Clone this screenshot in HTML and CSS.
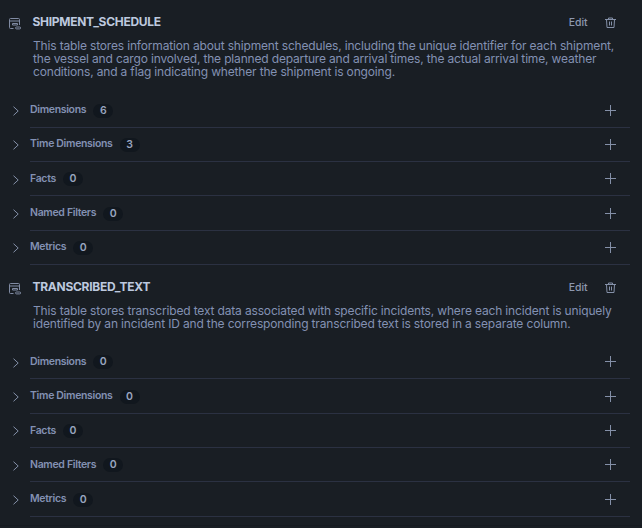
FILE: index.html
```
<!DOCTYPE html>
<html lang="en">
<head>
<meta charset="utf-8">
<title>Tables</title>
<link rel="stylesheet" href="styles.css">
</head>
<body>
<svg width="0" height="0" class="defs">
  <symbol id="table" viewBox="0 0 12 12"><path d="M4.500 10.500H1.500A1 1 0 0 1 .5 9.500V1.500A1 1 0 0 1 1.500 .5H9.500A1 1 0 0 1 10.500 1.500V7M.5 3H10.500M3.500 5.500H8.500V7H3.500ZM7.500 9H10.700A.9 .9 0 0 1 10.700 10.900H7.500A.9 .9 0 0 1 7.500 9Z"/></symbol>
  <symbol id="trash" viewBox="0 0 11 12"><path d="M0 2.500H11M3.500 2.500V1H7.500V2.500M1.500 2.500L2 10.500H9L9.500 2.500M4.500 4.500V8.500M6.500 4.500V8.500"/></symbol>
  <symbol id="plus" viewBox="0 0 11 11"><path d="M5.500 0V11M0 5.500H11"/></symbol>
  <symbol id="chevron" viewBox="0 0 6 10"><path d="M.5 .7L5.200 5L.5 9.300"/></symbol>
</svg>
<main>
  <section class="table first">
    <header><svg class="table-icon"><use href="#table"/></svg><h2>SHIPMENT_SCHEDULE</h2><button class="edit">Edit</button><svg class="trash"><use href="#trash"/></svg></header>
    <p>This table stores information about shipment schedules, including the unique identifier for each shipment,<br>the vessel and cargo involved, the planned departure and arrival times, the actual arrival time, weather<br>conditions, and a flag indicating whether the shipment is ongoing.</p>
    <ul>
      <li><svg class="chevron"><use href="#chevron"/></svg><div class="row"><span>Dimensions</span><b>6</b><svg class="plus"><use href="#plus"/></svg></div></li>
      <li><svg class="chevron"><use href="#chevron"/></svg><div class="row"><span>Time Dimensions</span><b>3</b><svg class="plus"><use href="#plus"/></svg></div></li>
      <li><svg class="chevron"><use href="#chevron"/></svg><div class="row"><span>Facts</span><b>0</b><svg class="plus"><use href="#plus"/></svg></div></li>
      <li><svg class="chevron"><use href="#chevron"/></svg><div class="row"><span>Named Filters</span><b>0</b><svg class="plus"><use href="#plus"/></svg></div></li>
      <li><svg class="chevron"><use href="#chevron"/></svg><div class="row"><span>Metrics</span><b>0</b><svg class="plus"><use href="#plus"/></svg></div></li>
    </ul>
  </section>
  <section class="table second">
    <header><svg class="table-icon"><use href="#table"/></svg><h2>TRANSCRIBED_TEXT</h2><button class="edit">Edit</button><svg class="trash"><use href="#trash"/></svg></header>
    <p>This table stores transcribed text data associated with specific incidents, where each incident is uniquely<br>identified by an incident ID and the corresponding transcribed text is stored in a separate column.</p>
    <ul>
      <li><svg class="chevron"><use href="#chevron"/></svg><div class="row"><span>Dimensions</span><b>0</b><svg class="plus"><use href="#plus"/></svg></div></li>
      <li><svg class="chevron"><use href="#chevron"/></svg><div class="row"><span>Time Dimensions</span><b>0</b><svg class="plus"><use href="#plus"/></svg></div></li>
      <li><svg class="chevron"><use href="#chevron"/></svg><div class="row"><span>Facts</span><b>0</b><svg class="plus"><use href="#plus"/></svg></div></li>
      <li><svg class="chevron"><use href="#chevron"/></svg><div class="row"><span>Named Filters</span><b>0</b><svg class="plus"><use href="#plus"/></svg></div></li>
      <li><svg class="chevron"><use href="#chevron"/></svg><div class="row"><span>Metrics</span><b>0</b><svg class="plus"><use href="#plus"/></svg></div></li>
    </ul>
  </section>
</main>
</body>
</html>
```
FILE: styles.css
```
* { box-sizing: border-box; }
body { margin: 0; height: 528px; overflow: hidden; background: #191e24; color: #8391b3; font-family: Inter, "Liberation Sans", sans-serif; }
main { height: 526px; border-bottom: 1px solid #161a20; }
.defs { display: none; }
svg { flex: none; fill: none; stroke: #8490a8; stroke-width: 1; }
.table { padding-right: 12px; }
.first { height: 265px; padding-top: 14px; }
.second { padding-top: 14px; }
header { display: flex; height: 16px; align-items: center; padding: 0 14px 0 9px; }
.table-icon { width: 12px; height: 12px; margin: 4px 11.500px 0 0; stroke: #808ba3; }
h2 { margin: 0; flex: 1; font-size: 12px; line-height: 16px; font-weight: 650; letter-spacing: -.28px; color: #bdc9df; }
.edit { border: 0; padding: 0; margin: 2px 17.500px 0 0; background: none; color: #8d98af; font: 550 10.5px/14px Inter, sans-serif; letter-spacing: -.1px; }
.trash { width: 11px; height: 12px; margin-top: 2px; }
p { margin: 9px 0 0 33px; font-size: 12px; line-height: 13px; letter-spacing: -.165px; white-space: nowrap; }
.second p { letter-spacing: -.155px; }
ul { list-style: none; margin: 15.700px 0 0; padding: 0; }
.second ul { margin-top: 15px; }
li { display: flex; height: 34.25px; align-items: stretch; }
.second li { height: 34.35px; }
.chevron { width: 6px; height: 10px; margin: 12.500px 11px 0 13px; }
.row { flex: 1; display: flex; align-items: center; border-bottom: 1px solid #2b3142; padding-right: 14px; }
.row span { font-size: 10.5px; letter-spacing: -.33px; font-weight: 600; line-height: 14px; margin-top: -.2px; }
.second .row span { margin-top: .6px; }
.row b { width: 20px; height: 14px; border-radius: 7px; margin: 1px 0 0 7px; background: #11171e; text-align: center; font-size: 10.5px; line-height: 14px; font-weight: 600; color: #99a5bf; }
.second .row b { margin-top: 1.500px; }
.plus { width: 11px; height: 11px; margin-left: auto; }
```
